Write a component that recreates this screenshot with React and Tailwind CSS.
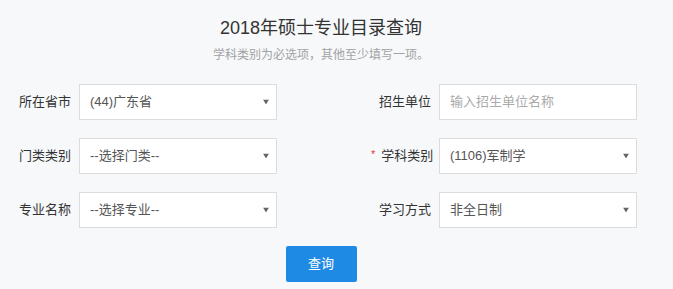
import React from 'react';

const font = { fontFamily: '"Liberation Sans", "Noto Sans CJK SC", sans-serif' };

function Arrow() {
  return (
    <svg width="6" height="5" viewBox="0 0 6 5" className="absolute right-[7px] top-1/2 -translate-y-1/2">
      <path d="M0 0 H6 L3 5 Z" fill="#666" />
    </svg>
  );
}

function SelectBox({ value }) {
  return (
    <div className="relative w-[198px] h-[36px] bg-white border border-[#dcdcdc] flex items-center pl-[10px] text-[13px] text-[#555]">
      {value}
      <Arrow />
    </div>
  );
}

function InputBox({ placeholder }) {
  return (
    <div className="w-[198px] h-[36px] bg-white border border-[#dcdcdc] flex items-center pl-[10px] text-[13px] text-[#aaa]">
      {placeholder}
    </div>
  );
}

function Field({ label, required, children }) {
  return (
    <div className="flex items-center gap-[8px]">
      <div className="w-[60px] text-right text-[13px] text-[#333] whitespace-nowrap">
        {required && <span className="text-[#e4393c] text-[11px] mr-[6px] relative -top-[2px]">*</span>}
        {label}
      </div>
      {children}
    </div>
  );
}

export default function App() {
  return (
    <div className="w-[673px] h-[289px] bg-[#f6f8fa] overflow-hidden" style={font}>
      <div className="w-[642px] pt-[16px]">
        <h1 className="text-center text-[18px] leading-[24px] text-[#333]">2018年硕士专业目录查询</h1>
        <p className="mt-[6px] text-center text-[12px] leading-[18px] text-[#a3a3a3]">
          学科类别为必选项，其他至少填写一项。
        </p>

        <div className="mt-[20px] pl-[11px] flex flex-col gap-[18px]">
          <div className="flex gap-[94px]">
            <Field label="所在省市"><SelectBox value="(44)广东省" /></Field>
            <Field label="招生单位"><InputBox placeholder="输入招生单位名称" /></Field>
          </div>
          <div className="flex gap-[94px]">
            <Field label="门类类别"><SelectBox value="--选择门类--" /></Field>
            <Field label="学科类别" required><SelectBox value="(1106)军制学" /></Field>
          </div>
          <div className="flex gap-[94px]">
            <Field label="专业名称"><SelectBox value="--选择专业--" /></Field>
            <Field label="学习方式"><SelectBox value="非全日制" /></Field>
          </div>
        </div>

        <div className="mt-[18px] flex justify-center">
          <button className="w-[71px] h-[36px] rounded-[2px] bg-[#1f8ae4] text-white text-[13px]">查询</button>
        </div>
      </div>
    </div>
  );
}
